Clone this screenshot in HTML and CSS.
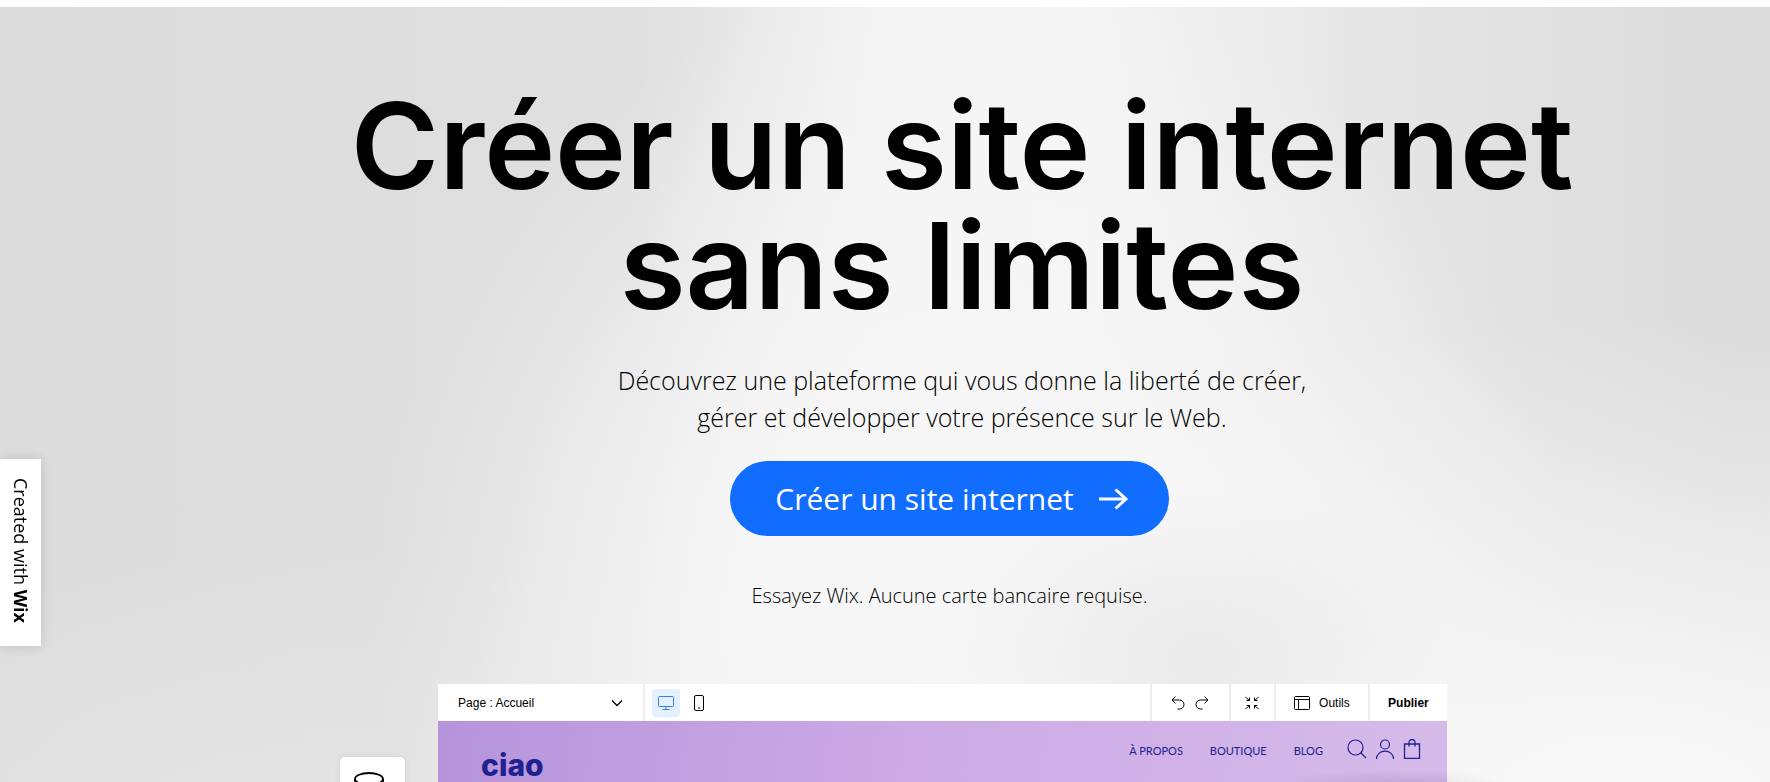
FILE: index.html
```html
<!DOCTYPE html>
<html lang="fr">
<head>
    <meta charset="UTF-8">
    <meta name="viewport" content="width=device-width, initial-scale=1.0">
    <title>Créer un site internet | Wix</title>
    <link rel="stylesheet" href="styles.css">
</head>
<body>
    <main class="hero">
        <section class="hero-intro">
            <h1 class="hero-title">Créer un site internet<br>sans limites</h1>
            <p class="hero-text">Découvrez une plateforme qui vous donne la liberté de créer,<br>gérer et développer votre présence sur le Web.</p>
        </section>

        <section class="hero-action">
            <a class="cta" href="#">
                <span>Créer un site internet</span>
                <svg class="cta-arrow" width="30" height="22" viewBox="0 0 30 22" fill="none" stroke="currentColor" stroke-width="3">
                    <path d="M0 11H27M16.500 1.500L27 11L16.500 20.500"/>
                </svg>
            </a>
            <p class="hero-note">Essayez Wix. Aucune carte bancaire requise.</p>
        </section>

        <section class="preview">
            <aside class="side-panel">
                <svg width="30" height="30" viewBox="0 0 30 30" fill="none" stroke="#000" stroke-width="1.800">
                    <ellipse cx="15" cy="7" rx="14" ry="6"/>
                    <path d="M1 7V15M29 7V15"/>
                </svg>
            </aside>
            <div class="editor">
                <div class="toolbar">
                    <button class="page-menu" type="button">
                        <span>Page : Accueil</span>
                        <svg width="12" height="8" viewBox="0 0 12 8" fill="none" stroke="currentColor" stroke-width="1.300">
                            <path d="M1 1.500L6 6.500L11 1.500"/>
                        </svg>
                    </button>
                    <div class="devices">
                        <button class="device active" type="button" aria-label="Ordinateur">
                            <svg width="16" height="16" viewBox="0 0 16 16" fill="none" stroke="currentColor">
                                <rect x=".5" y="1.500" width="15" height="10" rx="1"/>
                                <path d="M8 11.500V14.500M4.500 14.500H11.500"/>
                            </svg>
                        </button>
                        <button class="device" type="button" aria-label="Mobile">
                            <svg width="16" height="16" viewBox="0 0 16 16" fill="none" stroke="currentColor">
                                <rect x="3.500" y=".5" width="9" height="15" rx="1.500"/>
                                <path d="M7 13H9"/>
                            </svg>
                        </button>
                    </div>
                    <div class="history">
                        <button class="tool" type="button" aria-label="Annuler">
                            <svg width="14" height="14" viewBox="0 0 14 14" fill="none" stroke="currentColor">
                                <path d="M4.500 .5L1 4L4.500 7.500M1 4H8.500A4.500 4.500 0 0 1 8.500 13H6.500"/>
                            </svg>
                        </button>
                        <button class="tool" type="button" aria-label="Rétablir">
                            <svg width="14" height="14" viewBox="0 0 14 14" fill="none" stroke="currentColor">
                                <path d="M9.500 .5L13 4L9.500 7.500M13 4H5.500A4.500 4.500 0 0 0 5.500 13H7.500"/>
                            </svg>
                        </button>
                    </div>
                    <button class="tool zoom-out" type="button" aria-label="Réduire">
                        <svg width="14" height="14" viewBox="0 0 14 14" fill="none" stroke="currentColor">
                            <path d="M.5 1L4.500 4.500M4.500 1.500V4.500H1.500M13.500 1L9.500 4.500M9.500 1.500V4.500H12.500M.5 13L4.500 9.500M1.500 9.500H4.500V12.500M13.500 13L9.500 9.500M12.500 9.500H9.500V12.500"/>
                        </svg>
                    </button>
                    <button class="tool tools-menu" type="button">
                        <svg width="16" height="14" viewBox="0 0 16 14" fill="none" stroke="currentColor">
                            <rect x=".5" y=".5" width="15" height="13" rx="1"/>
                            <path d="M.5 3.500H15.500M4.500 3.500V13.500"/>
                        </svg>
                        <span>Outils</span>
                    </button>
                    <button class="tool publish" type="button">Publier</button>
                </div>

                <div class="site">
                    <span class="site-logo">ciao</span>
                    <nav class="site-nav">
                        <a href="#">À PROPOS</a>
                        <a href="#">BOUTIQUE</a>
                        <a href="#">BLOG</a>
                    </nav>
                    <div class="site-icons">
                        <svg width="20" height="20" viewBox="0 0 20 20" fill="none" stroke="currentColor" stroke-width="1.200">
                            <circle cx="8.500" cy="8.500" r="7.500"/>
                            <path d="M13.500 13.500L19 19"/>
                        </svg>
                        <svg width="20" height="20" viewBox="0 0 20 20" fill="none" stroke="currentColor" stroke-width="1.200">
                            <circle cx="10" cy="5.500" r="4.500"/>
                            <path d="M1.500 20C1.500 9.500 18.500 9.500 18.500 20"/>
                        </svg>
                        <svg width="18" height="20" viewBox="0 0 18 20" fill="none" stroke="currentColor" stroke-width="1.300">
                            <path d="M1.500 5H16.500V19.300H1.500ZM6 7.500V3.500A3 3 0 0 1 12 3.500V7.500"/>
                        </svg>
                    </div>
                </div>
            </div>
        </section>
    </main>

    <a class="wix-badge" href="#">Created with <strong>Wix</strong></a>
</body>
</html>
```

FILE: styles.css
```css
* {
    box-sizing: border-box;
}

body {
    margin: 0;
    padding-top: 7px;
    background: #fff;
    color: #000;
    font-family: "Open Sans", "Noto Sans", sans-serif;
}

h1,
p {
    margin: 0;
}

button {
    padding: 0;
    border: none;
    background: none;
    color: inherit;
    font: inherit;
    cursor: pointer;
}

svg {
    display: block;
    flex-shrink: 0;
}

.hero {
    display: flex;
    flex-direction: column;
    height: calc(100vh - 7px);
    padding-top: 79px;
    overflow: hidden;
    background:
        radial-gradient(7% 4% at 79% 102%, rgba(205, 205, 205, 0.8) 0%, rgba(225, 225, 225, 0) 100%),
        radial-gradient(14% 22% at 68% 84%, rgba(230, 230, 230, 0.8) 0%, rgba(236, 236, 236, 0) 100%),
        radial-gradient(48% 66% at 92% 106%, #f8f8f8 18%, rgba(246, 246, 246, 0) 100%),
        radial-gradient(34% 85% at 55% 80%, #f6f6f6 40%, rgba(245, 245, 245, 0) 100%),
        radial-gradient(40% 40% at 20% 110%, rgba(232, 232, 232, 0.8) 0%, rgba(232, 232, 232, 0) 100%),
        linear-gradient(90deg, #dcdcdc 0%, #dfdfdf 36%, #f3f3f3 49%, #f5f5f5 61%, #e7e7e7 76%, #dbdbdb 97%);
}

.hero-intro {
    padding-left: 154px;
    text-align: center;
}

.hero-title {
    font-family: Inter, sans-serif;
    font-size: 120px;
    font-weight: 600;
    line-height: 120px;
}

.hero-text {
    margin-top: 36px;
    font-size: 25px;
    font-weight: 300;
    line-height: 37px;
}

.hero-action {
    display: flex;
    flex-direction: column;
    align-items: center;
    padding: 25px 0 0 129px;
}

.cta {
    display: flex;
    align-items: center;
    gap: 25px;
    height: 75px;
    padding: 0 40px 0 45px;
    border-radius: 38px;
    background: #116dff;
    color: #fff;
    font-size: 30px;
    text-decoration: none;
}

.hero-note {
    margin-top: 46px;
    font-size: 20px;
    font-weight: 300;
    line-height: 28px;
}

.preview {
    display: flex;
    justify-content: center;
    gap: 33px;
    margin-top: 74px;
    padding-left: 17px;
}

.side-panel {
    width: 65px;
    height: 120px;
    margin-top: 73px;
    padding: 15px 14px;
    border-radius: 5px;
    background: #fff;
    box-shadow: 0 0 6px rgba(0, 0, 0, 0.1);
}

.editor {
    width: 57vw;
    font-family: "Liberation Sans", sans-serif;
}

.toolbar {
    display: flex;
    height: 37px;
    background: #fff;
    font-size: 12px;
}

.page-menu {
    display: flex;
    align-items: center;
    justify-content: space-between;
    width: 207px;
    padding: 0 20px;
    border-right: 2px solid #f0f0f0;
}

.devices {
    display: flex;
    flex: 1;
    align-items: center;
    gap: 5px;
    padding-left: 7px;
}

.device {
    display: grid;
    place-items: center;
    width: 28px;
    height: 28px;
    border-radius: 4px;
}

.device.active {
    background: #e3f0ff;
    color: #3b7ce8;
}

.tool,
.history {
    display: flex;
    align-items: center;
    justify-content: center;
}

.history,
.zoom-out,
.tools-menu,
.publish {
    border-left: 2px solid #ececec;
}

.history {
    gap: 10px;
    width: 79px;
}

.zoom-out {
    width: 45px;
}

.tools-menu {
    gap: 9px;
    width: 94px;
}

.publish {
    width: 79px;
    font-weight: bold;
}

.site {
    display: flex;
    align-items: flex-start;
    height: 120px;
    padding: 15px 26px 0 43px;
    background:
        radial-gradient(140px 14px at 96% 63px, rgba(150, 120, 170, 0.3) 0%, rgba(150, 120, 170, 0) 100%),
        linear-gradient(100deg, #b594dc 0%, #cbaae5 45%, #d6bbea 100%);
    color: #20208f;
}

.site-logo {
    margin-top: 11px;
    font-family: Inter, sans-serif;
    font-size: 30px;
    font-weight: 800;
    line-height: 36px;
}

.site-nav {
    display: flex;
    gap: 27px;
    margin-left: auto;
    font-family: Lato, sans-serif;
    font-size: 11px;
    line-height: 30px;
}

.site-nav a {
    color: inherit;
    text-decoration: none;
}

.site-icons {
    display: flex;
    gap: 8px;
    margin: 3px 0 0 24px;
}

.wix-badge {
    position: fixed;
    top: 459px;
    left: 0;
    width: 41px;
    height: 187px;
    padding-top: 19px;
    background: #fff;
    box-shadow: 0 0 10px rgba(0, 0, 0, 0.14);
    color: #000;
    font-size: 18px;
    line-height: 41px;
    text-decoration: none;
    writing-mode: vertical-rl;
}
```
